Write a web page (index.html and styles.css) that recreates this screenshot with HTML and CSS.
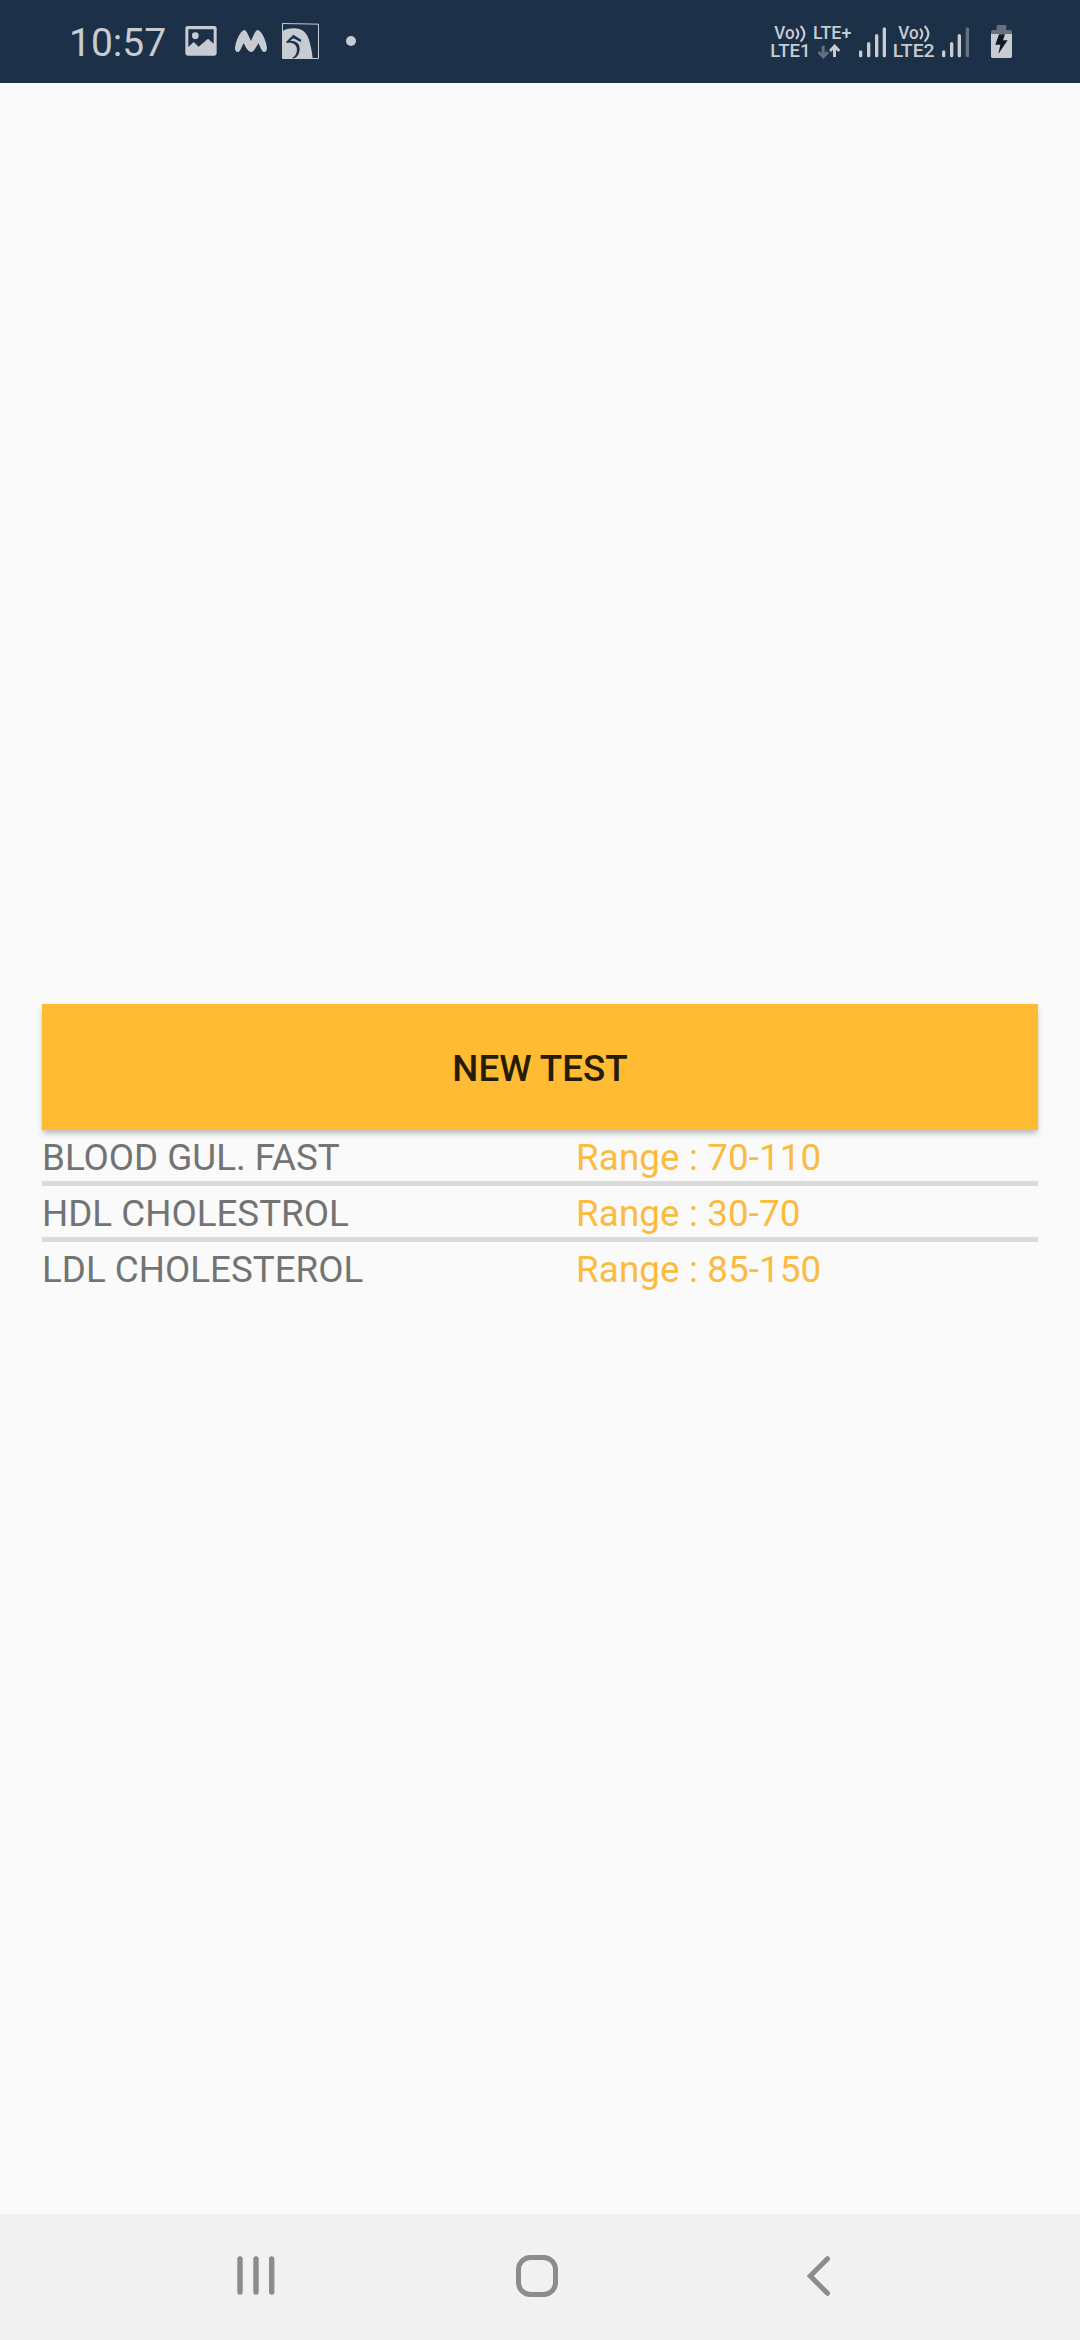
FILE: index.html
```html
<!DOCTYPE html>
<html lang="en">
<head>
<meta charset="utf-8">
<title>Tests</title>
<link rel="stylesheet" href="styles.css">
</head>
<body>
<div class="screen">
  <header class="status">
    <div class="status-side">
      <span class="clock">10:57</span>
      <svg class="ic" width="34" height="83" viewBox="402 0 102 249"><path fill-rule="evenodd" d="M413 78H493Q500 78 500 85V160Q500 167 493 167H413Q406 167 406 160V85Q406 78 413 78ZM415 88V141L431 126L446 140L474 116L491 131V88Z"/><circle cx="436" cy="107" r="10"/></svg>
      <svg class="ic moose" width="36" height="83" viewBox="549 0 108 249"><path d="M583 90C590 91 596 108 603 123C610 108 616 91 623 90C636 92 650 126 651 145C651 154 646 157 641 156C634 154 632 141 625 130C618 143 611 156 603 156C595 156 588 143 581 130C574 141 572 154 565 156C560 157 555 154 555 145C556 126 570 92 583 90Z"/></svg>
      <svg class="ic bird" width="40" height="83" viewBox="690 0 120 249"><path fill="none" stroke="#c7cbd2" stroke-width="3" d="M697.500 70.500L805.500 72.500V175.500H697.500Z"/><path d="M697 94Q709 85 731 85C761 85 773 103 779 126Q786 153 788 175H697Z"/><path class="cut" d="M709 125L730 104L754 119L752 126L730 115L720 122C740 121 750 132 749 149Q747 168 733 175H725Q741 165 741 149C740 134 730 126 709 129Z"/></svg>
      <svg class="ic dot" width="12" height="83" viewBox="885 0 36 249"><circle cx="903" cy="123" r="15"/></svg>
    </div>
    <div class="status-side status-right">
      <svg class="ic" width="42" height="83" viewBox="30 0 126 249"><text x="43" y="118" textLength="61" lengthAdjust="spacingAndGlyphs">Vo</text><path class="wave" d="M108 86Q122 101 108 117M122 78Q144 101 122 125"/><text x="31" y="171" textLength="121" lengthAdjust="spacingAndGlyphs">LTE1</text></svg>
      <svg class="ic" width="41" height="83" viewBox="156 0 123 249"><text x="159" y="117" textLength="115" lengthAdjust="spacingAndGlyphs">LTE+</text><path class="dim" d="M185 137H194V160L201 153L207 159L190 177L173 159L179 153L185 160Z"/><path d="M219 171H228V149L235 156L241 150L224 132L207 150L213 156L219 149Z"/></svg>
      <svg class="ic sig1" width="30" height="83" viewBox="291 0 90 249"><path class="bars" d="M302 156V167M326 131V167M350 107V167M373 87V167"/></svg>
      <svg class="ic vo2" width="43" height="83" viewBox="396 0 129 249"><text x="415" y="118" textLength="61" lengthAdjust="spacingAndGlyphs">Vo</text><path class="wave" d="M480 86Q494 101 480 117M494 78Q516 101 494 125"/><text x="398" y="171" textLength="126" lengthAdjust="spacingAndGlyphs">LTE2</text></svg>
      <svg class="ic sig2" width="29" height="83" viewBox="543 0 87 249"><path class="bars" d="M551 156V167M575 131V167M598 107V167"/><path class="bars dimbar" d="M622 87V167"/></svg>
      <svg class="ic batt" width="23" height="83" viewBox="690 0 69 249"><path class="dim" d="M710 79Q710 75 714 75H735Q739 75 739 79V90H750Q756 90 756 96V102H693V96Q693 90 699 90H710Z"/><path d="M693 102H756V169Q756 174 751 174H698Q693 174 693 169Z"/><path class="bolt" d="M717 103H735L729 121H743L715 162L721 134H706Z"/></svg>
    </div>
  </header>
  <main class="content">
    <button class="new-test">NEW TEST</button>
    <ul class="tests">
      <li class="test"><span class="name">BLOOD GUL. FAST</span><span class="range">Range : 70-110</span></li>
      <li class="test"><span class="name">HDL CHOLESTROL</span><span class="range">Range : 30-70</span></li>
      <li class="test"><span class="name">LDL CHOLESTEROL</span><span class="range">Range : 85-150</span></li>
    </ul>
  </main>
  <nav class="nav">
    <svg width="38" height="42" viewBox="0 0 38 42"><path class="recents" d="M3 4V37M19 4V37M34.700 4V37"/></svg>
    <svg class="home" width="42" height="42" viewBox="0 0 42 42"><rect x="2.500" y="2.500" width="37" height="37" rx="12"/></svg>
    <svg class="back" width="24" height="42" viewBox="0 0 24 42"><path d="M20.500 3.700L3.300 21L20.500 38.300"/></svg>
  </nav>
</div>
</body>
</html>
```

FILE: styles.css
```css
* { box-sizing: border-box; }

body {
  margin: 0;
  font-family: Roboto, sans-serif;
}

.screen {
  display: flex;
  flex-direction: column;
  width: 1080px;
  height: 2340px;
  background: #fafafa;
}

.status {
  display: flex;
  justify-content: space-between;
  height: 83px;
  padding: 0 67px 0 69px;
  background: #1c3148;
}

.status-side { display: flex; }

.clock {
  width: 115px;
  padding-top: 4px;
  font-size: 39px;
  line-height: 79px;
  color: #c7cbd2;
}

.ic {
  display: block;
  flex: none;
  fill: #c7cbd2;
}

.ic text {
  font-size: 53px;
  font-weight: 500;
}

.moose { margin-left: 15px; }
.bird { margin-left: 11px; }
.dot { margin-left: 25px; }
.sig1 { margin-left: 4px; }
.vo2 { margin-left: 5px; }
.sig2 { margin-left: 6px; }
.batt { margin-left: 20px; }

.cut { fill: #1c3148; }
.ic .dim { fill: #64717f; }
.bolt { fill: #111a24; }

.wave {
  fill: none;
  stroke: #c7cbd2;
  stroke-width: 6;
}

.bars {
  fill: none;
  stroke: #c7cbd2;
  stroke-width: 10;
  stroke-linecap: round;
}

.dimbar { stroke: #64717f; }

.content {
  display: flex;
  flex: 1;
  flex-direction: column;
  padding: 921px 42px 0;
}

.new-test {
  z-index: 1;
  height: 126px;
  padding: 2px 0 0;
  border: 0;
  background: #ffbb33;
  box-shadow: 0 4px 6px -1px rgba(0, 0, 0, .28);
  font: 500 36.75px/43px Roboto, sans-serif;
  color: #261c08;
}

.tests {
  margin: 0;
  padding: 0;
  list-style: none;
}

.test {
  display: flex;
  height: 56px;
  border-bottom: 5px solid #dadada;
  font-size: 36.75px;
  line-height: 55px;
}

.test:last-child { border-bottom: 0; }

.name {
  width: 534px;
  color: #737373;
}

.range {
  color: #fbbb40;
  letter-spacing: .12px;
}

.nav {
  display: flex;
  height: 126px;
  padding: 41px 0 0 237px;
  background: #f1f1f1;
  fill: none;
  stroke: #8c8c8c;
  stroke-width: 5;
  stroke-linecap: round;
}

.recents { stroke-width: 5.4; }
.home { margin-left: 241px; }
.back { margin-left: 249px; }
```
